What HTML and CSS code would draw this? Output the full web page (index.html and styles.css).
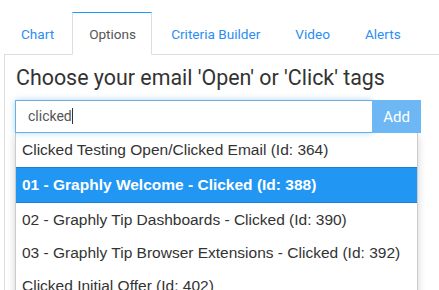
FILE: index.html
```html
<!DOCTYPE html>
<html lang="en">
<head>
    <meta charset="UTF-8">
    <meta name="viewport" content="width=device-width, initial-scale=1.0">
    <title>Options</title>
    <link rel="stylesheet" href="styles.css">
</head>
<body>
    <div class="page">
        <ul class="tabs">
            <li><a href="#">Chart</a></li>
            <li class="active"><a href="#">Options</a></li>
            <li><a href="#">Criteria Builder</a></li>
            <li><a href="#">Video</a></li>
            <li><a href="#">Alerts</a></li>
        </ul>

        <div class="panel">
            <h3 class="title">Choose your email 'Open' or 'Click' tags</h3>

            <div class="tag-picker">
                <div class="input-group">
                    <div class="tag-input">clicked<span class="caret"></span></div>
                    <button class="add-btn">Add</button>
                </div>

                <ul class="suggestions">
                    <li>Clicked Testing Open/Clicked Email (Id: 364)</li>
                    <li class="selected">01 - Graphly Welcome - Clicked (Id: 388)</li>
                    <li>02 - Graphly Tip Dashboards - Clicked (Id: 390)</li>
                    <li>03 - Graphly Tip Browser Extensions - Clicked (Id: 392)</li>
                    <li>Clicked Initial Offer (Id: 402)</li>
                </ul>
            </div>
        </div>
    </div>
</body>
</html>
```

FILE: styles.css
```css
body {
    margin: 0;
    font-family: 'Roboto', 'Liberation Sans', sans-serif;
    background-color: #fff;
    overflow: hidden;
}

.page {
    padding: 12px 0 0 4px;
}

.tabs {
    display: flex;
    list-style: none;
    margin: 0;
    padding: 0;
    border-bottom: 1px solid #ddd;
}

.tabs li {
    margin-right: 2px;
    margin-bottom: -1px;
}

.tabs a {
    display: block;
    height: 41px;
    line-height: 43px;
    padding: 0 15px 0 16px;
    font-size: 13.6px;
    color: #2b8ef0;
    text-decoration: none;
    border: 1px solid transparent;
}

.tabs li.active a {
    color: #555;
    background-color: #fff;
    border-color: #ddd;
    border-top-color: #2196f3;
    border-bottom-color: #fff;
}

.panel {
    border-left: 1px solid #ddd;
    padding: 11px 0 0 10px;
    height: 260px;
}

.title {
    margin: 0 0 10px 1px;
    font-weight: normal;
    font-size: 21.4px;
    color: #333;
    line-height: 24px;
}

.tag-picker {
    width: 406px;
}

.input-group {
    display: flex;
    height: 33px;
}

.tag-input {
    flex: 1;
    border: 1px solid #66afe9;
    border-right: none;
    box-shadow: 0 0 6px rgba(102, 175, 233, 0.5);
    padding: 0 12px;
    font-size: 14px;
    line-height: 31px;
    color: #555;
    background: #fff;
}

.caret {
    display: inline-block;
    width: 1px;
    height: 16px;
    background: #333;
    vertical-align: -3px;
}

.add-btn {
    width: 49px;
    border: none;
    background-color: #6db7f5;
    color: #fff;
    font-family: 'Roboto', sans-serif;
    font-size: 15px;
    padding: 0;
}

.suggestions {
    list-style: none;
    margin: 0;
    padding: 0;
    width: 401px;
    border: 1px solid #ccc;
    border-top: none;
    background: #fff;
    box-shadow: 0 3px 8px rgba(0, 0, 0, 0.18);
    font-family: 'Liberation Sans', Arial, sans-serif;
    font-size: 15.5px;
    color: #333;
}

.suggestions li {
    padding: 0 6px;
    height: 33px;
    line-height: 34px;
    white-space: nowrap;
}

.suggestions li:first-child {
    height: 34px;
}

.suggestions li.selected {
    height: 34px;
    background-color: #2196f3;
    border-top: 1px solid #1b7fd6;
    border-bottom: 1px solid #1b7fd6;
    color: #fff;
    font-weight: bold;
}
```
